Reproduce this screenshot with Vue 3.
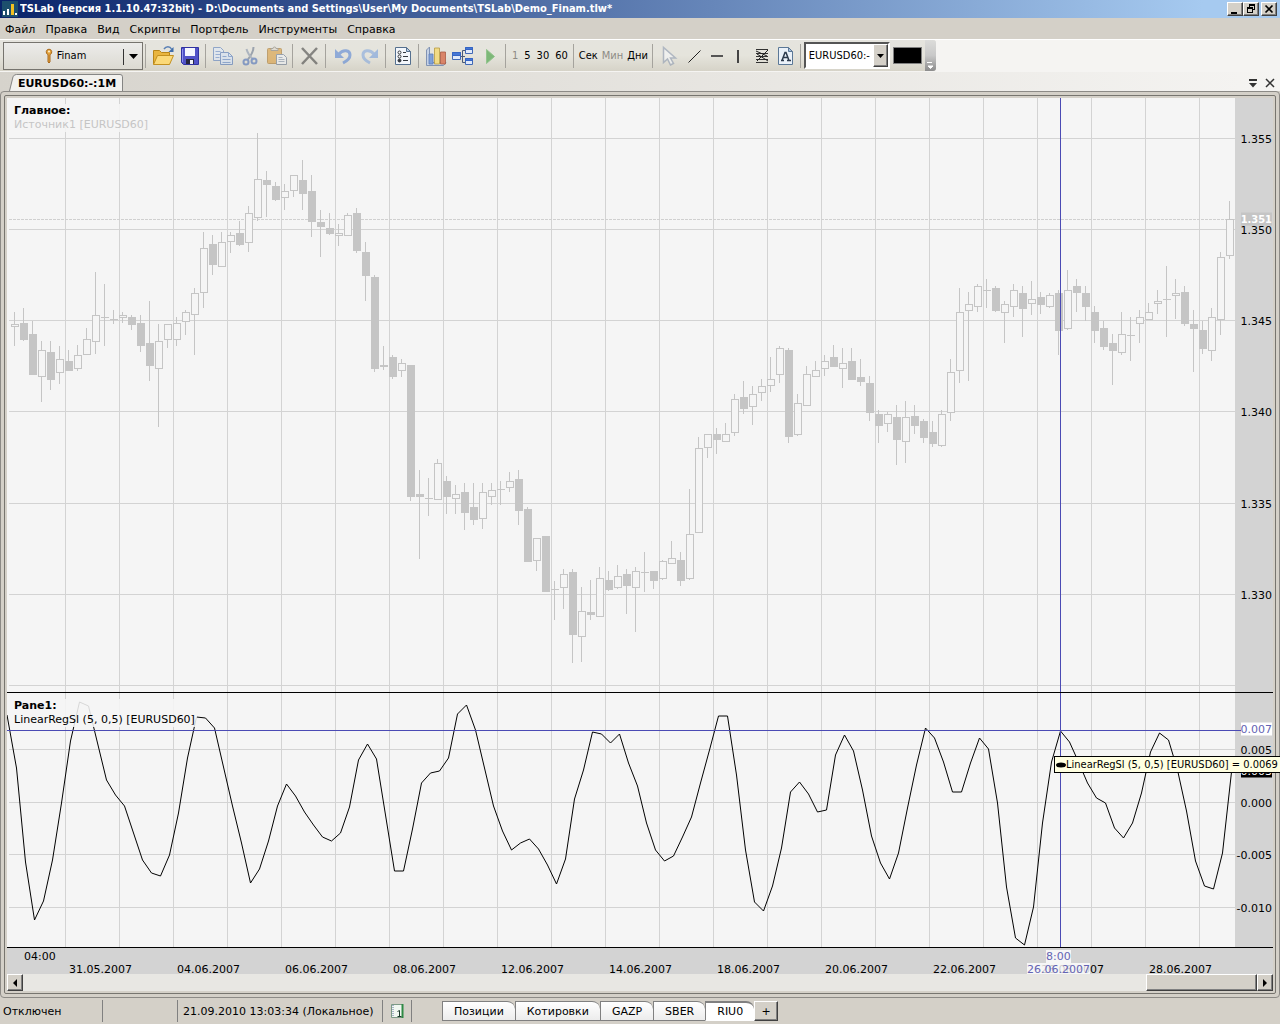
<script setup>
import { computed, ref } from 'vue'

const menu = ['Файл', 'Правка', 'Вид', 'Скрипты', 'Портфель', 'Инструменты', 'Справка']
const sheets = ['Позиции', 'Котировки', 'GAZP', 'SBER', 'RIU0']
const activeSheet = ref('RIU0')
const symbol = ref('EURUSD60:-')

// plot area in chart units
const plot = { left: 7, right: 1235 }
const price = { top: 98, bottom: 692 }
const slope = { top: 693, bottom: 947 }
const step = 9

// high, body top, body bottom, low, 1 = falling bar
const bars = [
  [312, 324, 327, 346, 0], [308, 323, 340, 341, 1], [321, 334, 375, 375, 1], [341, 350, 377, 402, 0],
  [341, 352, 380, 390, 1], [346, 359, 373, 384, 0], [350, 361, 371, 371, 1], [345, 355, 369, 371, 0],
  [328, 339, 355, 355, 0], [272, 315, 342, 354, 0], [284, 317, 318, 346, 1], [310, 319, 320, 324, 1],
  [312, 315, 318, 323, 0], [315, 317, 325, 330, 1], [315, 323, 346, 352, 1], [301, 343, 366, 381, 1],
  [324, 341, 369, 427, 0], [324, 324, 340, 348, 0], [317, 323, 340, 346, 0], [310, 312, 322, 335, 0],
  [288, 293, 315, 355, 0], [232, 248, 293, 308, 0], [235, 244, 265, 275, 1], [232, 242, 267, 267, 0],
  [232, 235, 242, 253, 0], [221, 233, 245, 246, 1], [206, 213, 243, 252, 0], [133, 179, 218, 221, 0],
  [171, 180, 185, 217, 1], [182, 186, 200, 201, 1], [184, 191, 198, 210, 0], [175, 175, 191, 197, 0],
  [160, 180, 194, 210, 1], [175, 191, 222, 237, 1], [210, 222, 227, 257, 1], [213, 228, 234, 235, 1],
  [224, 233, 236, 246, 0], [213, 215, 236, 236, 0], [208, 213, 251, 253, 1], [242, 252, 276, 301, 1],
  [275, 277, 369, 372, 1], [346, 365, 367, 370, 1], [355, 357, 377, 379, 1], [359, 363, 371, 377, 0],
  [365, 365, 497, 501, 1], [470, 494, 497, 559, 1], [478, 498, 499, 516, 1], [459, 463, 500, 500, 0],
  [476, 481, 497, 514, 1], [485, 494, 499, 514, 0], [483, 492, 513, 530, 1], [483, 507, 520, 525, 1],
  [483, 492, 519, 529, 0], [483, 490, 497, 505, 0], [481, 489, 490, 505, 1], [472, 481, 488, 492, 0],
  [470, 479, 511, 525, 1], [507, 509, 562, 562, 1], [538, 538, 561, 571, 0], [536, 536, 592, 592, 1],
  [581, 589, 590, 620, 1], [569, 574, 588, 609, 0], [569, 572, 635, 663, 1], [587, 611, 637, 662, 0],
  [580, 612, 615, 620, 1], [567, 578, 617, 617, 0], [571, 580, 590, 591, 1], [565, 576, 588, 589, 0],
  [569, 574, 586, 614, 1], [567, 571, 588, 632, 0], [552, 572, 573, 592, 1], [571, 571, 581, 589, 1],
  [560, 561, 579, 580, 0], [541, 558, 564, 564, 0], [552, 560, 581, 586, 1], [489, 534, 579, 580, 0],
  [437, 448, 533, 533, 0], [434, 434, 448, 458, 0], [428, 434, 440, 454, 1], [423, 434, 442, 442, 0],
  [394, 399, 433, 436, 0], [381, 397, 409, 414, 1], [386, 394, 407, 425, 0], [379, 386, 393, 401, 0],
  [357, 379, 386, 392, 0], [346, 348, 375, 383, 0], [348, 350, 437, 443, 1], [394, 403, 435, 436, 0],
  [366, 374, 406, 406, 0], [361, 370, 377, 377, 0], [355, 361, 369, 376, 0], [345, 357, 367, 367, 1],
  [348, 363, 369, 388, 0], [348, 361, 380, 380, 1], [359, 377, 382, 386, 1], [376, 383, 413, 421, 1],
  [410, 414, 426, 443, 1], [412, 414, 424, 432, 0], [405, 417, 440, 465, 1], [401, 417, 442, 463, 0],
  [405, 416, 426, 434, 1], [419, 421, 438, 443, 1], [421, 432, 444, 447, 1], [410, 414, 446, 447, 0],
  [359, 372, 413, 421, 0], [288, 312, 371, 383, 0], [292, 304, 311, 381, 0], [284, 286, 307, 312, 0],
  [279, 290, 291, 308, 1], [286, 288, 311, 312, 1], [301, 304, 313, 343, 0], [284, 290, 307, 317, 0],
  [286, 293, 309, 337, 1], [281, 299, 304, 315, 0], [292, 297, 305, 314, 1], [293, 295, 307, 308, 0],
  [290, 293, 331, 355, 1], [270, 290, 329, 330, 0], [279, 286, 293, 312, 1], [286, 293, 307, 321, 1],
  [306, 312, 331, 343, 1], [321, 328, 347, 350, 1], [334, 343, 351, 385, 1], [312, 334, 353, 355, 0],
  [317, 335, 336, 361, 1], [310, 317, 324, 343, 0], [303, 312, 320, 320, 0], [290, 301, 304, 314, 0],
  [266, 299, 300, 337, 1], [279, 293, 296, 319, 0], [286, 292, 324, 326, 1], [310, 324, 329, 372, 1],
  [321, 330, 349, 354, 1], [308, 317, 351, 361, 0], [252, 257, 320, 335, 0], [201, 219, 256, 259, 0]
]

const slopeValues = [
  715, 768, 862, 920, 901, 860, 803, 741, 702, 706, 743, 780, 795, 806, 833, 860, 873, 876, 855, 813,
  758, 717, 718, 728, 767, 806, 843, 883, 869, 841, 806, 784, 796, 812, 825, 837, 841, 833, 807, 760,
  744, 759, 815, 871, 871, 829, 783, 773, 771, 758, 714, 705, 730, 768, 806, 831, 850, 843, 839, 849,
  865, 884, 859, 799, 770, 732, 734, 743, 734, 763, 786, 823, 850, 861, 856, 837, 817, 783, 750, 716,
  716, 775, 850, 902, 911, 886, 848, 792, 782, 794, 812, 810, 755, 735, 751, 790, 836, 863, 879, 853,
  808, 765, 728, 738, 762, 792, 792, 763, 738, 749, 803, 887, 938, 945, 907, 823, 762, 731, 742, 762,
  783, 798, 803, 828, 838, 823, 793, 752, 733, 740, 770, 811, 861, 886, 889, 853, 772
]

const slopeLine = computed(() =>
  slopeValues.map((y, i) => `${plot.left + i * step + (i ? 0.5 : 0)},${y}`).join(' ')
)

const wicks = computed(() =>
  bars.map((b, i) => `M${14.5 + i * step} ${b[0]}V${b[1]}M${14.5 + i * step} ${b[2]}V${b[3]}`).join('')
)

const gridX = Array.from({ length: 22 }, (_, i) => 65.5 + i * 54)
const priceTicks = [
  { y: 138, text: '1.355' },
  { y: 229, text: '1.350' },
  { y: 320, text: '1.345' },
  { y: 411, text: '1.340' },
  { y: 503, text: '1.335' },
  { y: 594, text: '1.330' },
  { y: 685, text: '' }
]
const slopeTicks = [
  { y: 749, text: '0.005' },
  { y: 802, text: '0.000' },
  { y: 854, text: '-0.005' },
  { y: 907, text: '-0.010' }
]
const dates = ['31.05', '04.06', '06.06', '08.06', '12.06', '14.06', '18.06', '20.06', '22.06', '26.06', '28.06']

const cursor = { x: 1060, y: 730 }

const topOf = (pane, y) => ({ top: `${((y - pane.top) / (pane.bottom - pane.top)) * 100}%` })
const leftOf = (x) => ({ left: `${((x - plot.left) / (plot.right - plot.left)) * 100}%` })
const viewBox = (pane) =>
  `${plot.left} ${pane.top} ${plot.right - plot.left} ${pane.bottom - pane.top}`
</script>

<template>
  <div class="window">
    <header class="title-bar">
      <svg class="app-icon" width="16" height="16" viewBox="0 0 16 16" shape-rendering="crispEdges">
        <rect width="16" height="16" fill="#1d4f6d" />
        <path d="M1 10h2v4H1zM5 8h2v6H5zM13 12h2v2h-2z" fill="#fff" />
        <path d="M9 3h3v11H9z" fill="#f2c021" />
      </svg>
      <h1>TSLab (версия 1.1.10.47:32bit) - D:\Documents and Settings\User\My Documents\TSLab\Demo_Finam.tlw*</h1>
      <div class="window-buttons">
        <button aria-label="Свернуть">
          <svg width="12" height="10" viewBox="0 0 12 10" shape-rendering="crispEdges"><path d="M2 8h6v2H2z" /></svg>
        </button>
        <button aria-label="Восстановить">
          <svg width="12" height="10" viewBox="0 0 12 10" shape-rendering="crispEdges">
            <path d="M4 0h6v6H8V5h1V2H5v1H4zM2 3h6v6H2zM3 5v3h4V5z" fill-rule="evenodd" />
          </svg>
        </button>
        <button class="close" aria-label="Закрыть">
          <svg width="12" height="10" viewBox="0 0 12 10"><path d="M2.500 1.500l7 7M9.500 1.500l-7 7" stroke="#000" stroke-width="1.700" /></svg>
        </button>
      </div>
    </header>

    <nav class="menu-bar">
      <button v-for="item in menu" :key="item">{{ item }}</button>
    </nav>

    <div class="toolbar-row">
      <div class="toolbar">
        <div class="provider">
          <button class="provider-name">
            <svg width="8" height="16" viewBox="0 0 8 16">
              <path d="M4 1.200a2.800 2.800 0 0 1 1 5.400V14l-1 1-1-1V6.600a2.800 2.800 0 0 1 1-5.400z" fill="#e3a23c" stroke="#a9691c" />
              <circle cx="4" cy="3.600" r="1" fill="#fff3d6" />
            </svg>
            Finam
          </button>
          <button class="provider-more" aria-label="Поставщики">
            <svg width="9" height="5" viewBox="0 0 9 5"><path d="M0 0h9L4.500 5z" /></svg>
          </button>
        </div>
        <i class="sep"></i>
        <button class="tool" aria-label="Открыть">
          <svg width="24" height="24" viewBox="0 0 24 24">
            <path d="M2.500 20V6.500h6l2 2h8V20z" fill="#e9b53e" stroke="#b98618" />
            <path d="M2.500 20.500l4-9h16l-4 9z" fill="#fbd978" stroke="#c3901f" />
            <path d="M13 5c2-3 6-3 7.500 0" fill="none" stroke="#5a80b5" stroke-width="1.500" />
            <path d="M22.500 3v5h-5z" fill="#3f6dab" />
          </svg>
        </button>
        <button class="tool" aria-label="Сохранить">
          <svg width="24" height="24" viewBox="0 0 24 24">
            <path d="M3.500 3.500h17v17h-15l-2-2z" fill="#5052c8" stroke="#3032a0" />
            <path d="M7 4h10v8H7z" fill="#f4f6ff" />
            <path d="M8 15h8v5H8z" fill="#26263f" />
            <path d="M12 16h3v4h-3z" fill="#eef0f8" />
            <path d="M4.500 5v13" stroke="#8d90ee" />
          </svg>
        </button>
        <i class="sep"></i>
        <button class="tool dim" aria-label="Копировать">
          <svg width="24" height="24" viewBox="0 0 24 24">
            <path d="M2.500 3.500h7l3 3v10h-10z" fill="#dde8fa" stroke="#4c74b8" />
            <path d="M4.500 7.500h5M4.500 10.500h5M4.500 13.500h4" stroke="#5a84cc" />
            <path d="M9.500 8.500h8l4 4v8h-12z" fill="#d2e1f9" stroke="#3e68b0" />
            <path d="M17.500 8.500v4h4M11.500 12.500h4M11.500 15.500h8M11.500 18.500h8" fill="none" stroke="#4d7ac4" />
          </svg>
        </button>
        <button class="tool dim" aria-label="Вырезать">
          <svg width="24" height="24" viewBox="0 0 24 24" fill="none">
            <path d="M15.500 3c0 5-2 8-6 13" stroke="#5f6f88" stroke-width="2" />
            <path d="M8.500 5c1 4 3 7 7 11" stroke="#8090a8" stroke-width="2" />
            <circle cx="8" cy="18" r="2.500" stroke="#3c64b4" stroke-width="2" />
            <circle cx="16" cy="17" r="2.500" stroke="#3c64b4" stroke-width="2" />
          </svg>
        </button>
        <button class="tool dim" aria-label="Вставить">
          <svg width="24" height="24" viewBox="0 0 24 24">
            <rect x="2.500" y="4.500" width="14" height="15" rx="1" fill="#d8952c" stroke="#a06a18" />
            <path d="M6 6.500h7v-2h-2a1.500 1.500 0 0 0-3 0H6z" fill="#ddd9cc" stroke="#77736a" />
            <path d="M11.500 10.500h7l3 3v7h-10z" fill="#eef1f6" stroke="#5b6b84" />
            <path d="M13.500 13.500h4M13.500 15.500h6M13.500 17.500h6" stroke="#7d8fa8" />
          </svg>
        </button>
        <i class="sep"></i>
        <button class="tool dim" aria-label="Удалить">
          <svg width="24" height="24" viewBox="0 0 24 24"><path d="M4 4l15 16M19 4L4 20" stroke="#383838" stroke-width="2.500" /></svg>
        </button>
        <i class="sep"></i>
        <button class="tool dim" aria-label="Отменить">
          <svg width="24" height="24" viewBox="0 0 24 24">
            <path d="M8 10c4-5 11-4 11 1 0 4-3 6-7 8" fill="none" stroke="#4a7cd4" stroke-width="3" />
            <path d="M4 5v9h9z" fill="#4a7cd4" />
          </svg>
        </button>
        <button class="tool dim" aria-label="Повторить">
          <svg width="24" height="24" viewBox="0 0 24 24">
            <path d="M16 10c-4-5-11-4-11 1 0 4 3 6 7 8" fill="none" stroke="#7aa2de" stroke-width="3" />
            <path d="M20 5v9h-9z" fill="#6c98dc" />
          </svg>
        </button>
        <i class="sep"></i>
        <button class="tool" aria-label="Свойства">
          <svg width="24" height="24" viewBox="0 0 24 24">
            <path d="M4.500 3.500h11l4 4v13h-15z" fill="#f3f7fc" stroke="#55708f" />
            <path d="M15.500 3.500v4h4z" fill="#b8cbe2" stroke="#55708f" />
            <circle cx="8.500" cy="8.500" r="1.500" fill="#fff" stroke="#33383f" />
            <circle cx="8.500" cy="12.500" r="1.500" fill="#fff" stroke="#33383f" />
            <circle cx="8.500" cy="16.500" r="1.500" fill="#33383f" stroke="#33383f" />
            <path d="M12 8.500h3M12 12.500h5M12 16.500h5" stroke="#33383f" />
          </svg>
        </button>
        <i class="sep"></i>
        <button class="tool" aria-label="График">
          <svg width="24" height="24" viewBox="0 0 24 24">
            <path d="M2.500 6l3-3v15.500H22l-2.500 3h-17z" fill="#c5d2e6" stroke="#8193b3" />
            <path d="M5 10h4v10H5z" fill="#7ea0d8" stroke="#5f7fb8" stroke-width=".8" />
            <path d="M10.500 4h5v16h-5z" fill="#f1db86" stroke="#b89a40" stroke-width=".8" />
            <path d="M16.500 8h5v12h-5z" fill="#d98468" stroke="#a85a44" stroke-width=".8" />
          </svg>
        </button>
        <button class="tool" aria-label="Редактор">
          <svg width="24" height="24" viewBox="0 0 24 24">
            <path d="M9 12.500h5M14 6.500h-2.500v12H15" fill="none" stroke="#4a5a78" />
            <path d="M1.500 8.500h8v7h-8zM14.500 3.500h7v6h-7zM14.500 14.500h7v6h-7z" fill="#dfe9fa" stroke="#4169b5" />
            <path d="M1.500 8.500h8v3h-8zM14.500 3.500h7v2h-7zM14.500 14.500h7v2h-7z" fill="#4577d4" stroke="#3564c4" />
          </svg>
        </button>
        <button class="tool" aria-label="Запустить">
          <svg width="24" height="24" viewBox="0 0 24 24"><path d="M8.500 5.500v14l8-7z" fill="#7db878" stroke="#92c48d" /></svg>
        </button>
        <i class="sep"></i>
        <button class="text-tool" disabled>1</button>
        <button class="text-tool">5</button>
        <button class="text-tool">30</button>
        <button class="text-tool">60</button>
        <i class="sep"></i>
        <button class="text-tool unit">Сек</button>
        <button class="text-tool unit" disabled>Мин</button>
        <button class="text-tool unit">Дни</button>
        <i class="sep"></i>
        <button class="tool dim" aria-label="Указатель">
          <svg width="24" height="24" viewBox="0 0 24 24">
            <path d="M6.500 3.500v15l4-3.500 3 6 3-1.500-3-5.500h5z" fill="#f8fafd" stroke="#8594ad" stroke-width="1.500" />
          </svg>
        </button>
        <button class="tool narrow" aria-label="Линия">
          <svg width="24" height="24" viewBox="0 0 24 24"><path d="M5.500 18.500l12-12" stroke="#222" /></svg>
        </button>
        <button class="tool narrow" aria-label="Горизонтальная линия">
          <svg width="24" height="24" viewBox="0 0 24 24"><path d="M5 12h12" stroke="#555" stroke-width="2" /></svg>
        </button>
        <button class="tool narrow" aria-label="Вертикальная линия">
          <svg width="24" height="24" viewBox="0 0 24 24"><path d="M9 6v13" stroke="#444" stroke-width="2" /></svg>
        </button>
        <button class="tool narrow" aria-label="Уровни Фибоначчи">
          <svg width="24" height="24" viewBox="0 0 24 24">
            <path d="M4 5.500h12M4 9.500h12M4 12.500h12M4 15.500h12M4 18.500h12" stroke="#333" />
            <path d="M4 7l11 5M5 10l11 7M5 17l11-11" stroke="#222" />
          </svg>
        </button>
        <button class="tool narrow" aria-label="Текст">
          <svg width="24" height="24" viewBox="0 0 24 24">
            <path d="M3.500 3.500h10l4 4v13h-14z" fill="#eaf1f9" stroke="#5b7897" />
            <path d="M13.500 3.500v4h4z" fill="#a9c0da" stroke="#5b7897" />
            <path d="M7 16.500l3-8h1l3 8M8.500 13.500h4M6 16.500h3M12 16.500h4" fill="none" stroke="#2c3a4c" stroke-width="1.500" />
          </svg>
        </button>
        <i class="sep"></i>
        <div class="combo">
          <select v-model="symbol" aria-label="Инструмент">
            <option>EURUSD60:-</option>
          </select>
          <span class="combo-arrow">
            <svg width="7" height="4" viewBox="0 0 7 4"><path d="M0 0h7L3.500 4z" /></svg>
          </span>
        </div>
        <button class="swatch" aria-label="Цвет"></button>
        <button class="overflow" aria-label="Ещё">
          <svg width="8" height="8" viewBox="0 0 8 8"><path d="M1 1.500h5M2 5h5L4.500 7.500z" fill="#fff" stroke="#fff" /></svg>
        </button>
      </div>
    </div>

    <div class="tab-row">
      <button class="doc-tab">
        <svg viewBox="0 0 114 18" preserveAspectRatio="none">
          <path d="M.5 18L4 3Q5 .5 7.500 .5H111q2.500 0 2.500 2.500V18" fill="#f2f1ee" stroke="#808080" />
        </svg>
        <span>EURUSD60:-:1M</span>
      </button>
      <div class="tab-actions">
        <button aria-label="Список вкладок">
          <svg width="10" height="9" viewBox="0 0 10 9"><path d="M1 0h8v2H1zM1 4h8L5 8.500z" fill="#333" /></svg>
        </button>
        <button aria-label="Закрыть вкладку">
          <svg width="10" height="10" viewBox="0 0 10 10"><path d="M1 1l8 8M9 1L1 9" stroke="#333" stroke-width="1.500" /></svg>
        </button>
      </div>
    </div>

    <main class="frame">
      <div class="chart">
        <section class="pane price-pane">
          <svg class="plot" :viewBox="viewBox(price)" preserveAspectRatio="none" shape-rendering="crispEdges">
            <path v-for="x in gridX" :key="x" class="grid" :d="`M${x} 98V692`" />
            <path v-for="t in priceTicks" :key="t.y" class="grid" :d="`M9 ${t.y + 0.5}H1235`" />
            <path class="last-price" d="M9 219.500H1235" />
            <path class="wick" :d="wicks" />
            <template v-for="(b, i) in bars" :key="i">
              <rect v-if="b[4]" class="down" :x="11 + i * step" :y="b[1]" width="8" :height="b[2] - b[1]" />
              <rect v-else class="up" :x="11.5 + i * step" :y="b[1] + 0.5" width="7" :height="b[2] - b[1] - 1" />
            </template>
            <path class="cross" :d="`M${cursor.x + 0.5} 98V692`" />
          </svg>
          <div class="caption">
            <h2>Главное:</h2>
            <p class="faded">Источник1 [EURUSD60]</p>
          </div>
          <div class="scale">
            <span v-for="t in priceTicks" :key="t.y" :style="topOf(price, t.y)">{{ t.text }}</span>
            <span class="last-tag" :style="topOf(price, 218)">1.351</span>
          </div>
        </section>
        <div class="divider"></div>
        <section class="pane slope-pane">
          <svg class="plot" :viewBox="viewBox(slope)" preserveAspectRatio="none">
            <g shape-rendering="crispEdges">
              <path v-for="x in gridX" :key="x" class="grid" :d="`M${x} 693V947`" />
              <path v-for="t in slopeTicks" :key="t.y" class="grid" :d="`M9 ${t.y + 0.5}H1235`" />
            </g>
            <polyline class="slope-line" :points="slopeLine" />
          </svg>
          <div class="caption">
            <h2>Pane1:</h2>
            <p>LinearRegSl (5, 0,5) [EURUSD60]</p>
          </div>
          <div class="scale">
            <span v-for="t in slopeTicks" :key="t.y" :style="topOf(slope, t.y)">{{ t.text }}</span>
            <span class="slope-tag" :style="topOf(slope, 770)">0.003</span>
            <span class="cursor-tag" :style="topOf(slope, 728)">0.007</span>
          </div>
          <svg class="plot cross-layer" :viewBox="viewBox(slope)" preserveAspectRatio="none" shape-rendering="crispEdges">
            <path class="cross" :d="`M7 ${cursor.y + 0.5}H1241M${cursor.x + 0.5} 693V947`" />
          </svg>
          <div class="tip-area">
            <div class="tooltip" :style="{ ...leftOf(1054), ...topOf(slope, 756) }">
              <svg width="10" height="6" viewBox="0 0 10 6"><ellipse cx="5" cy="3" rx="5" ry="2.500" /></svg>LinearRegSl (5, 0,5) [EURUSD60] = 0.0069
            </div>
          </div>
        </section>
        <div class="divider"></div>
        <div class="time-axis">
          <div class="time-labels">
            <span class="hour" :style="leftOf(24)">04:00</span>
            <span v-for="(d, i) in dates" :key="d" :style="leftOf(69 + i * 108)">{{ d }}.2007</span>
            <span class="hour mark" :style="leftOf(1046)">8:00</span>
            <span class="mark" :style="leftOf(1027)">26.06.2007</span>
          </div>
        </div>
        <div class="scrollbar">
          <button aria-label="Прокрутить влево">
            <svg width="4" height="8" viewBox="0 0 4 8"><path d="M4 0v8L0 4z" /></svg>
          </button>
          <div class="track"><div class="thumb"></div></div>
          <button aria-label="Прокрутить вправо">
            <svg width="4" height="8" viewBox="0 0 4 8"><path d="M0 0v8l4-4z" /></svg>
          </button>
        </div>
      </div>
    </main>

    <footer class="status-bar">
      <span class="cell state">Отключен</span>
      <span class="cell blank"></span>
      <span class="cell clock">21.09.2010 13:03:34 (Локальное)</span>
      <span class="cell log">
        <svg width="14" height="16" viewBox="0 0 14 16">
          <path d="M1.500 1.500h11v13h-11z" fill="#f1f7f1" stroke="#7d9a86" />
          <path d="M12.500 1v14" stroke="#2f8a45" stroke-width="2" />
          <path d="M3 2v12" stroke="#a8b4c8" stroke-width="2" stroke-dasharray="1 1" />
          <path d="M7.500 8.500l2-1V13M7.500 13.500h4" fill="none" stroke="#1d3b2c" />
        </svg>
      </span>
      <div class="sheets">
        <button
          v-for="name in sheets"
          :key="name"
          class="sheet"
          :class="{ active: name === activeSheet }"
          @click="activeSheet = name"
        >
          {{ name }}
        </button>
        <button class="add" aria-label="Добавить">+</button>
      </div>
    </footer>
  </div>
</template>

<style>
body {
  margin: 0;
  background: #d4d0c8;
  overflow-x: hidden;
}
</style>

<style scoped>
.window {
  display: flex;
  flex-direction: column;
  min-height: 100vh;
  background: #d4d0c8;
  color: #000;
  font: 11px/13px 'DejaVu Sans', Verdana, sans-serif;
}

.window * {
  box-sizing: border-box;
}

button {
  margin: 0;
  padding: 0;
  border: 0;
  background: none;
  color: inherit;
  font: inherit;
  white-space: nowrap;
}

svg {
  display: block;
  flex: none;
}

h1,
h2,
p {
  margin: 0;
  font-size: 11px;
  line-height: 14px;
}

.title-bar {
  display: flex;
  align-items: center;
  height: 18px;
  padding: 0 3px 0 2px;
  background: linear-gradient(90deg, #0a246a, #a6caf0 94%);
  color: #fff;
}

.title-bar h1 {
  flex: 1;
  margin-left: 2px;
  overflow: hidden;
  white-space: nowrap;
  font-family: 'DejaVu Sans Condensed', Tahoma, sans-serif;
}

.window-buttons {
  display: flex;
}

.window-buttons button,
.scrollbar button,
.thumb,
.combo-arrow,
.add {
  background: #d4d0c8;
  border: 1px solid;
  border-color: #fff #404040 #404040 #fff;
  box-shadow: inset -1px -1px #808080;
}

.window-buttons button {
  display: grid;
  place-items: center;
  width: 16px;
  height: 14px;
}

.window-buttons .close {
  margin-left: 2px;
}

.menu-bar {
  display: flex;
  align-items: center;
  gap: 10px;
  height: 21px;
  padding: 2px 0 0 5px;
}

.toolbar-row {
  height: 33px;
  background: #f5f4f2;
  border-top: 1px solid #fff;
}

.toolbar {
  display: flex;
  align-items: center;
  width: max-content;
  height: 31px;
  padding-left: 3px;
  border-radius: 0 3px 3px 0;
  background: linear-gradient(#e5e4de, #e5e4dc 50%, #d6d3c8);
  font-family: 'DejaVu Sans Condensed', Tahoma, sans-serif;
}

.provider {
  display: flex;
  width: 140px;
  height: 28px;
  border: 1px solid #76746e;
  background: linear-gradient(#ececea, #dcdad2);
}

.provider-name {
  flex: 1;
  display: flex;
  align-items: center;
  justify-content: center;
  gap: 4px;
  padding-left: 4px;
}

.provider-more {
  display: grid;
  place-items: center;
  width: 19px;
  height: 16px;
  margin-top: 6px;
  border-left: 1px solid #333;
}

.sep {
  width: 1px;
  height: 24px;
  margin: 0 3px 0 2px;
  background: #a5a39d;
}

.tool {
  display: grid;
  place-items: center;
  width: 27px;
  height: 28px;
}

.narrow {
  width: 23px;
}

.dim svg {
  opacity: 0.55;
}

.text-tool {
  padding: 0 3px;
}

.unit {
  padding: 0 2px;
}

.text-tool:disabled {
  color: #8d8b85;
}

.combo {
  display: flex;
  position: relative;
  width: 86px;
  height: 27px;
  border: 2px solid;
  border-color: #555 #fff #fff #555;
  background: #fff;
}

.combo select {
  appearance: none;
  width: 100%;
  padding: 0 16px 0 3px;
  border: 0;
  background: #fff;
  color: #000;
  font: inherit;
}

.combo-arrow {
  position: absolute;
  top: 0;
  right: 0;
  display: grid;
  place-items: center;
  width: 15px;
  height: 100%;
  pointer-events: none;
}

.swatch {
  width: 29px;
  height: 17px;
  margin: 0 3px;
  border: 1px solid #808080;
  background: #000;
}

.overflow {
  display: flex;
  align-items: flex-end;
  justify-content: center;
  width: 11px;
  height: 31px;
  padding-bottom: 2px;
  border-radius: 0 3px 3px 0;
  background: linear-gradient(#dcdcda, #c8c8c8 50%, #8c8c8c);
}

.tab-row {
  display: flex;
  align-items: flex-end;
  height: 19px;
  padding: 0 5px 0 9px;
  background: linear-gradient(90deg, #d6d3cc, #f5f4f2);
}

.doc-tab {
  position: relative;
  width: 114px;
  height: 17px;
  padding: 2px 0 0 2px;
  font-weight: bold;
}

.doc-tab svg {
  position: absolute;
  inset: 0;
  width: 100%;
  height: 100%;
}

.doc-tab span {
  position: relative;
}

.tab-actions {
  display: flex;
  gap: 7px;
  margin-left: auto;
  padding-bottom: 3px;
}

.frame {
  flex: 1;
  display: flex;
  padding: 3px;
  border: 1px solid #8c8a86;
  border-radius: 4px;
}

.chart {
  flex: 1;
  display: flex;
  flex-direction: column;
  min-width: 0;
  padding: 2px;
  border: 1px solid #77756f;
  border-radius: 2px;
}

.pane {
  position: relative;
  display: flex;
  min-height: 0;
  background: #f5f5f5;
}

.price-pane {
  flex: 594 1 0;
}

.slope-pane {
  flex: 254 1 0;
}

.plot {
  position: absolute;
  top: 0;
  left: 0;
  width: calc(100% - 38px);
  height: 100%;
}

.cross-layer {
  overflow: visible;
}

.grid {
  stroke: #d3d3d3;
}

.last-price {
  stroke: #d0d0d0;
  stroke-dasharray: 3 1;
}

.wick {
  stroke: #c5c5c5;
}

.down {
  fill: #c5c5c5;
}

.up {
  fill: #f5f5f5;
  stroke: #c5c5c5;
}

.cross {
  stroke: #4a4ab4;
}

.slope-line {
  fill: none;
  stroke: #000;
}

.caption {
  position: relative;
  align-self: flex-start;
  margin: 6px 0 0 5px;
  padding: 0 2px;
  background: rgba(245, 245, 245, 0.88);
}

.caption .faded {
  color: #c5c5c5;
}

.scale {
  position: relative;
  width: 38px;
  margin-left: auto;
  background: #d3d3d3;
}

.scale span {
  position: absolute;
  right: 1px;
  margin-top: 1px;
  line-height: 13px;
  transform: translateY(-50%);
}

.scale .last-tag {
  background: #c5c5c5;
  color: #fff;
  font-family: 'DejaVu Sans Condensed', Tahoma, sans-serif;
  font-weight: bold;
}

.scale .slope-tag {
  background: #000;
  color: #fff;
}

.scale .cursor-tag {
  background: #fff;
  color: #6464b4;
}

.divider {
  height: 1px;
  background: #000;
}

.tip-area {
  position: absolute;
  inset: 0 38px 0 0;
  pointer-events: none;
}

.tooltip {
  position: absolute;
  display: flex;
  align-items: center;
  padding: 1px 2px 1px 1px;
  border: 1px solid #000;
  background: #ffffe1;
  font-family: 'DejaVu Sans Condensed', Tahoma, sans-serif;
  white-space: nowrap;
}

.time-axis {
  height: 26px;
  padding-right: 38px;
  background: #d3d3d3;
}

.time-labels {
  position: relative;
  height: 100%;
}

.time-labels span {
  position: absolute;
  top: 15px;
  line-height: 13px;
}

.time-labels .hour {
  top: 2px;
}

.time-labels .mark {
  background: rgba(255, 255, 255, 0.8);
  color: #6464b4;
}

.scrollbar {
  position: relative;
  display: flex;
  height: 17px;
  background: #e8e7e3;
}

.scrollbar button {
  display: grid;
  place-items: center;
  width: 16px;
}

.track {
  flex: 1;
  display: flex;
  justify-content: flex-end;
}

.thumb {
  width: 9%;
}

.status-bar {
  display: flex;
  align-items: center;
  height: 26px;
}

.cell {
  display: flex;
  align-items: center;
  height: 22px;
  padding: 0 4px 0 5px;
  border-right: 1px solid #808080;
  white-space: nowrap;
}

.state {
  width: 103px;
  padding-left: 3px;
}

.blank {
  width: 75px;
}

.clock {
  width: 205px;
}

.log {
  padding: 0 7px;
}

.sheets {
  display: flex;
  margin-left: 30px;
}

.sheet {
  height: 20px;
  padding: 0 11px;
  border: 1px solid #808080;
  border-right-width: 0;
  border-radius: 0 8px 0 0;
  background: linear-gradient(#fff, #ececec);
}

.sheet.active {
  border-top-width: 2px;
  border-bottom-color: #fff;
  background: #fff;
}

.add {
  width: 24px;
  height: 20px;
}
</style>
